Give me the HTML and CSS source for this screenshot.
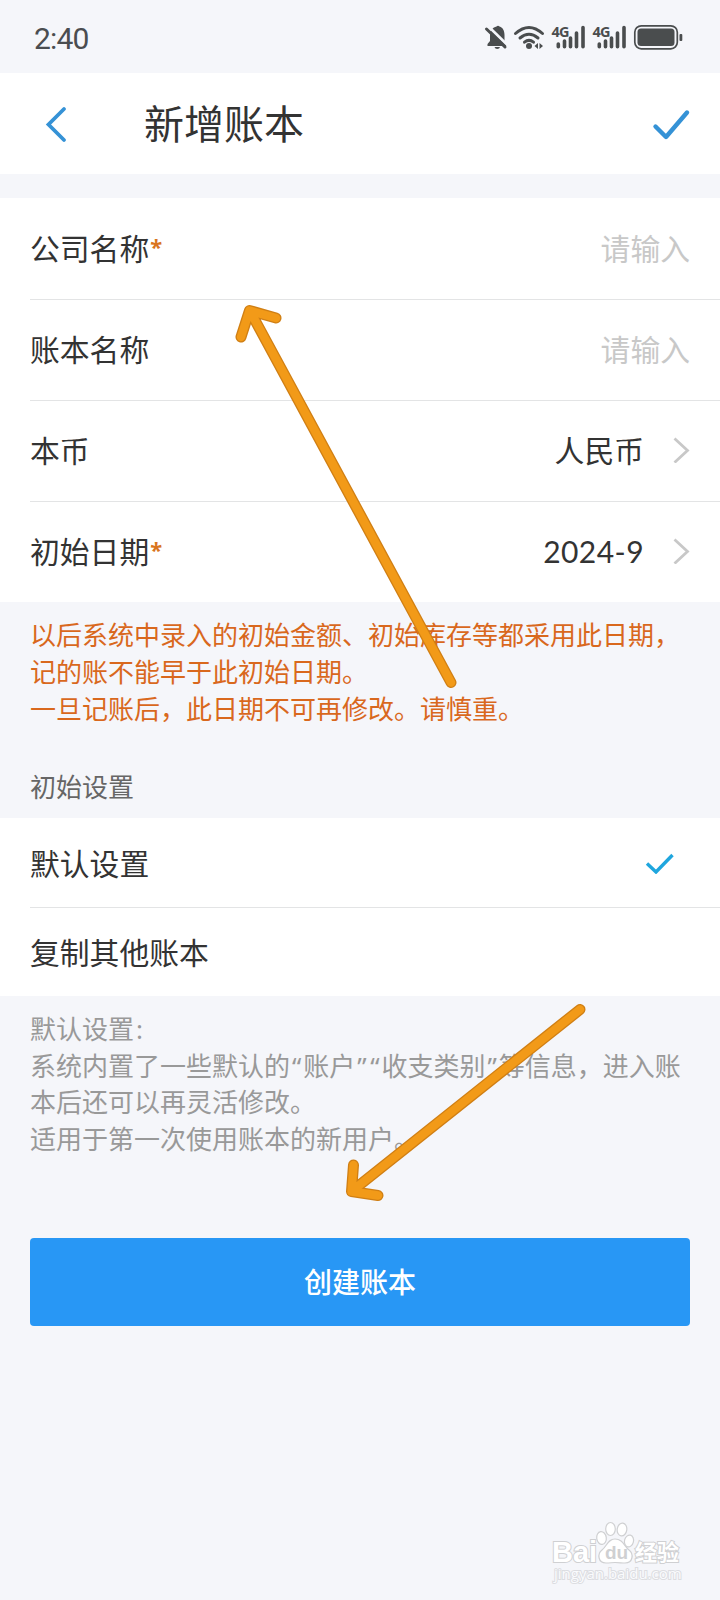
FILE: index.html
```html
<!DOCTYPE html>
<html lang="zh-CN">
<head>
<meta charset="utf-8">
<title>新增账本</title>
<link rel="stylesheet" href="styles.css">
</head>
<body>
<div class="screen">
  <div class="status">
    <span class="time">2:40</span>
    <svg class="status-icons" width="200" height="30" viewBox="0 0 200 30">
      <g fill="#4a4d4e">
        <path d="M2.500 22V20L5 17V12C5 6 8 3.500 11.500 2.500Q13 1.200 14.500 2.500C18 3.500 19.500 7 19.500 11V17L21.500 20V22Z"/>
        <path d="M9.500 23H15Q14.500 25 12.200 25Q10 25 9.500 23Z"/>
      </g>
      <path d="M3.500 2.500L23 21.500" stroke="#f5f6fa" stroke-width="2.600"/>
      <path d="M1.500 5L20 23" stroke="#4a4d4e" stroke-width="3" stroke-linecap="round"/>
      <g fill="none" stroke="#4a4d4e" stroke-width="3" stroke-linecap="round">
        <path d="M30.500 9.500Q44 -2.500 57.500 9.500"/>
        <path d="M35 14Q44 6.500 53 14"/>
        <path d="M39.500 18.200Q44 14.500 48.500 18.200"/>
      </g>
      <circle cx="44" cy="22" r="3" fill="#4a4d4e"/>
      <path d="M49.500 22L53 19V25ZM58 22L54.500 19V25Z" fill="#4a4d4e"/>
      <g class="net">
        <text x="66.500" y="12.500">4G</text>
        <text x="107.500" y="12.500">4G</text>
      </g>
      <g stroke="#4a4d4e" stroke-width="3.600" stroke-linecap="round">
        <path d="M73.300 20V22.800M79.500 17V22.800M85.500 14V22.800M91.500 9V22.800M98 3.500V22.800"/>
        <path d="M114.300 20V22.800M120.500 17V22.800M126.500 14V22.800M132.500 9V22.800M139 3.500V22.800"/>
      </g>
      <rect x="149.800" y="1.800" width="42.500" height="23" rx="6.500" fill="none" stroke="#4a4d4e" stroke-width="1.700"/>
      <rect x="152.500" y="4.500" width="37" height="17.500" rx="3.500" fill="#4a4d4e"/>
      <rect x="194.500" y="10" width="2.800" height="7" rx="1" fill="#4a4d4e"/>
    </svg>
  </div>

  <header class="header">
    <svg class="back" width="24" height="38" viewBox="0 0 24 38"><path d="M20 4L4.500 19.500L20 35" fill="none" stroke="#3592d6" stroke-width="3.800" stroke-linecap="round"/></svg>
    <h1 class="title">新增账本</h1>
    <svg width="40" height="34" viewBox="0 0 40 34"><path d="M4.500 19.500L15 30L36 5.500" fill="none" stroke="#3592d6" stroke-width="4.400" stroke-linecap="round" stroke-linejoin="round"/></svg>
  </header>

  <section class="card">
    <div class="row"><span>公司名称<b class="star">*</b></span><span class="hint">请输入</span></div>
    <div class="row"><span>账本名称</span><span class="hint">请输入</span></div>
    <div class="row"><span>本币</span><span class="value">人民币<svg width="18" height="28" viewBox="0 0 18 28"><path d="M2.500 3.500L15.500 15.500L2.500 27.500" fill="none" stroke="#c8c8c8" stroke-width="2.800"/></svg></span></div>
    <div class="row"><span>初始日期<b class="star">*</b></span><span class="value"><span class="date">2024-9</span><svg width="18" height="28" viewBox="0 0 18 28"><path d="M2.500 3.500L15.500 15.500L2.500 27.500" fill="none" stroke="#c8c8c8" stroke-width="2.800"/></svg></span></div>
  </section>

  <p class="warning">以后系统中录入的初始金额、初始库存等都采用此日期，<br>记的账不能早于此初始日期。<br>一旦记账后，此日期不可再修改。请慎重。</p>

  <h2 class="group">初始设置</h2>
  <section class="card options">
    <div class="row"><span>默认设置</span><svg class="chosen" width="30" height="24" viewBox="0 0 30 24"><path d="M2 13.500L11 22L27.500 5" fill="none" stroke="#1fa6de" stroke-width="3.400"/></svg></div>
    <div class="row"><span>复制其他账本</span></div>
  </section>

  <p class="desc">默认设置<span class="mark colon">:</span><br>系统内置了一些默认的<span class="mark">“</span>账户<span class="mark">”</span><span class="mark">“</span>收支类别<span class="mark">”</span>等信息，进入账<br>本后还可以再灵活修改。<br>适用于第一次使用账本的新用户。</p>

  <button class="create">创建账本</button>

  <svg class="arrows" width="720" height="1600" viewBox="0 0 720 1600">
    <g fill="none" stroke-linecap="round" stroke-linejoin="round">
      <g stroke="#d07f14" stroke-width="11">
        <path d="M451 682.500L250 311M241 337L249.500 310.500L276 318"/>
        <path d="M580 1009.500L352 1191M353.500 1165L351.500 1191.500L378 1195.500"/>
      </g>
      <g stroke="#f29a18" stroke-width="8.400">
        <path d="M451 682.500L250 311M241 337L249.500 310.500L276 318"/>
        <path d="M580 1009.500L352 1191M353.500 1165L351.500 1191.500L378 1195.500"/>
      </g>
    </g>
  </svg>

  <svg class="watermark" width="150" height="70" viewBox="0 0 150 70">
    <g fill="#fff" stroke="#cfd0d2" stroke-width="1.200">
      <text class="wm-brand" x="10" y="42">Bai</text>
      <ellipse cx="59.500" cy="18" rx="4.800" ry="6.500" transform="rotate(-8 59.500 18)"/>
      <ellipse cx="68.500" cy="9" rx="4.800" ry="6.500"/>
      <ellipse cx="80" cy="9.500" rx="4.800" ry="6.500" transform="rotate(8 80 9.500)"/>
      <ellipse cx="87" cy="21" rx="4.500" ry="6" transform="rotate(14 87 21)"/>
      <path d="M73 19C66 19 65 26 60 30C55 34 56 43 64 43C68 43 70 42.500 73 42.500C77 42.500 80 43 83 43C91 43 92 34 87 30C82 26 81 19 73 19Z"/>
      <text class="wm-du" x="63" y="39">du</text>
      <text class="wm-cn" x="93" y="40">经验</text>
    </g>
    <text class="wm-url" x="12" y="59">jingyan.baidu.com</text>
  </svg>
</div>
</body>
</html>
```

FILE: styles.css
```css
* { box-sizing: border-box; }

body { margin: 0; }

.screen {
  position: relative;
  width: 720px;
  height: 1600px;
  overflow: hidden;
  background: #f5f6fa;
  color: #333;
  font-family: "Noto Sans CJK SC", sans-serif;
}

.status {
  display: flex;
  justify-content: space-between;
  height: 73px;
  padding: 24px 35px 0 34px;
}

.status-icons { overflow: visible; }

.time {
  font: 30px/30px Roboto, sans-serif;
  letter-spacing: -0.8px;
  color: #4a4d50;
}

.net text {
  font: bold 14.500px/1 "Noto Sans", sans-serif;
  letter-spacing: -0.8px;
  fill: #4a4d4e;
}

.header {
  display: flex;
  align-items: center;
  height: 101px;
  margin-bottom: 24px;
  padding: 0 29px 0 44px;
  background: #fff;
}

.title {
  flex: 1;
  margin: 0 0 0 76px;
  padding-bottom: 4px;
  font-size: 40px;
  font-weight: 400;
  line-height: 60px;
}

.card {
  padding-left: 30px;
  background: #fff;
}

.row {
  display: flex;
  align-items: center;
  justify-content: space-between;
  height: 101.200px;
  padding: 0 30px 4px 0;
  border-bottom: 1px solid #e3e4e5;
  font-size: 29.800px;
  line-height: 44px;
}

.row:first-child { height: 102px; }

.row:last-child {
  height: 100px;
  border-bottom: 0;
}

.options .row {
  padding-bottom: 2px;
}

.options .row:first-child { height: 90px; }

.options .row:last-child { height: 88px; }

.star {
  margin-left: 1px;
  color: #d9741e;
  font: bold 22px/22px "Noto Sans", sans-serif;
  vertical-align: 5px;
}

.hint { color: #c8c8c8; }

.value {
  display: flex;
  align-items: center;
  gap: 28px;
}

.date {
  padding-top: 2px;
  font-family: Lato, sans-serif;
  font-size: 30px;
  letter-spacing: 0.450px;
}

.chosen { margin-right: 15px; }

.warning,
.desc {
  margin: 0;
  padding: 0 30px;
  font-size: 26px;
  line-height: 36.600px;
  white-space: nowrap;
}

.warning {
  padding-top: 14px;
  color: #d9681d;
}

.group {
  margin: 0;
  padding: 41px 30px 13px;
  color: #666;
  font-size: 26px;
  font-weight: 400;
  line-height: 38px;
}

.desc {
  padding-top: 14px;
  color: #999;
}

.mark {
  display: inline-block;
  width: 13.200px;
  text-align: center;
  font-family: "Noto Sans", sans-serif;
  line-height: 30px;
}

.colon {
  width: auto;
  padding-left: 2px;
}

.create {
  display: block;
  width: 660px;
  height: 88px;
  margin: 81px 30px 0;
  padding: 0 0 2px;
  border: 0;
  border-radius: 4px;
  background: #2897f5;
  color: #fff;
  font-family: inherit;
  font-size: 28px;
  font-weight: 500;
}

.arrows {
  position: absolute;
  top: 0;
  left: 0;
  pointer-events: none;
}

.watermark {
  position: absolute;
  top: 1520px;
  left: 542px;
}

.watermark text {
  paint-order: stroke;
  stroke-width: 2px;
}

.wm-brand { font: bold 29px "Liberation Sans", sans-serif; }

.watermark .wm-du {
  font: bold 19px "Liberation Sans", sans-serif;
  fill: #cfd0d2;
  stroke: none;
}

.wm-cn { font: bold 22px "Noto Sans CJK SC", sans-serif; }

.wm-url {
  font: 15px "Open Sans", sans-serif;
  fill: #fafbfd;
  stroke: #dcdde1;
}
```
